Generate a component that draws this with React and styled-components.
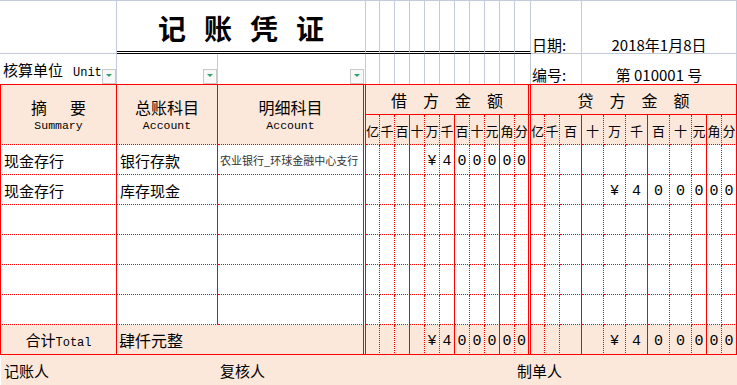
import React from 'react';
import styled, { createGlobalStyle } from 'styled-components';

const RED = '#ff0000';
const GRID = '#c3cad9';
const PEACH = '#fce8da';
const CJK = `"Noto Sans CJK SC", "Noto Sans", sans-serif`;
const MONO = `"Liberation Mono", "DejaVu Sans Mono", monospace`;

const Global = createGlobalStyle`
  html, body { margin: 0; padding: 0; background: #fff; }
  body { font-family: ${CJK}; color: #000; overflow: hidden; }
  * { box-sizing: border-box; }
`;

const Sheet = styled.div`
  display: grid;
  grid-template-columns: 117px 101px 148px 14px repeat(9, 15px) 16px 14px 15px repeat(6, 22px) repeat(3, 15px);
  grid-template-rows: 54px 30px 31px 30px repeat(6, 30px) 30px 31px;
  width: 737px;
  font-size: 15px;
  line-height: 1;
`;

/* ---------- top (plain sheet grid) area ---------- */
const TopCell = styled.div`
  grid-column: span ${p => p.$span || 1};
  position: relative;
  display: flex;
  align-items: flex-end;
  justify-content: ${p => (p.$center ? 'center' : 'flex-start')};
  padding: 0 0 ${p => p.$pb ?? 1}px ${p => p.$pl ?? 0}px;
  border-top: ${p => (p.$first ? `1px solid ${GRID}` : 'none')};
  border-right: 1px solid ${GRID};
  border-bottom: ${p =>
    p.$rule === 'double' ? '3px double #000' : p.$rule === 'grid' ? `1px solid ${GRID}` : 'none'};
  white-space: nowrap;
`;

const TitleCell = styled.div`
  grid-column: span 2;
  display: flex;
  align-items: center;
  justify-content: center;
  gap: 18px;
  padding-top: 3px;
  border-top: 1px solid ${GRID};
  border-right: 1px solid ${GRID};
  border-bottom: 3px double #000;
  font-size: 28px;
  font-weight: 700;
`;

const Label = styled.span`
  white-space: nowrap;
`;

const Latin = styled.span`
  font-family: ${MONO};
  font-size: ${p => p.$size || 12}px;
  margin-left: ${p => p.$gap || 0}px;
`;

const Dropdown = styled.span`
  position: absolute;
  right: ${p => p.$inset || 0}px;
  bottom: 0;
  width: 14px;
  height: 15px;
  border: 1px solid #c9c9c9;
  background: #f8f8f8;
  &::after {
    content: '';
    position: absolute;
    left: 50%;
    top: 4px;
    margin-left: -3px;
    border-left: 3px solid transparent;
    border-right: 3px solid transparent;
    border-top: 3px solid #2ea36c;
  }
`;

/* ---------- voucher table ---------- */
const HeadCell = styled.div`
  grid-row: span ${p => p.$rows || 1};
  grid-column: span ${p => p.$span || 1};
  display: flex;
  flex-direction: column;
  align-items: center;
  justify-content: center;
  padding-top: ${p => p.$pt || 0}px;
  background: ${PEACH};
  border-top: 1px solid ${RED};
  border-left: ${p => (p.$left ? `1px solid ${RED}` : 'none')};
  border-right: ${p => (p.$double ? `3px double ${RED}` : `1px solid ${RED}`)};
  border-bottom: 1px ${p => (p.$solidBottom ? 'solid' : 'dotted')} ${RED};
`;

const HeadTitle = styled.div`
  display: flex;
  gap: ${p => p.$gap || 0}px;
  font-size: 16px;
  line-height: 19px;
  white-space: nowrap;
`;

const HeadSub = styled.div`
  font-family: ${MONO};
  font-size: 11.5px;
  line-height: 14px;
  margin-top: 2px;
`;

const sepBorder = sep =>
  sep === 'double' ? `3px double ${RED}` : sep === 'solid' ? `1px solid ${RED}` : `1px dotted ${RED}`;

const DigitCell = styled.div`
  display: flex;
  align-items: center;
  justify-content: center;
  padding-top: ${p => (p.$head ? 1 : 3)}px;
  background: ${p => (p.$peach ? PEACH : '#fff')};
  border-right: ${p => sepBorder(p.$sep)};
  border-bottom: 1px ${p => (p.$closing ? 'solid' : 'dotted')} ${RED};
  font-family: ${p => (p.$head ? CJK : MONO)};
  font-size: ${p => (p.$head ? 13 : 15)}px;
  white-space: nowrap;
`;

const TextCell = styled.div`
  grid-column: span ${p => p.$span || 1};
  display: flex;
  align-items: center;
  justify-content: ${p => (p.$center ? 'center' : 'flex-start')};
  padding: 1px 0 0 ${p => p.$pl ?? 3}px;
  background: ${p => (p.$peach ? PEACH : '#fff')};
  border-left: ${p => (p.$left ? `1px solid ${RED}` : 'none')};
  border-right: ${p => (p.$double ? `3px double ${RED}` : `1px solid ${RED}`)};
  border-bottom: 1px ${p => (p.$closing ? 'solid' : 'dotted')} ${RED};
  font-size: ${p => p.$size || 15}px;
  color: ${p => p.$color || '#000'};
  white-space: nowrap;
  overflow: hidden;
`;

const FooterBar = styled.div`
  grid-column: 1 / -1;
  display: flex;
  align-items: center;
  margin-left: 1px;
  background: ${PEACH};
  font-size: 15px;
`;

const Signer = styled.div`
  width: ${p => p.$w}px;
  padding-left: ${p => p.$pl}px;
  white-space: nowrap;
`;

/* ---------- data ---------- */
const units = ['亿', '千', '百', '十', '万', '千', '百', '十', '元', '角', '分'];
const debitSep = ['dot', 'dot', 'solid', 'dot', 'dot', 'solid', 'dot', 'dot', 'solid', 'dot', 'double'];
const creditSep = ['dot', 'dot', 'solid', 'dot', 'dot', 'solid', 'dot', 'dot', 'solid', 'dot', 'solid'];
const amount = ['', '', '', '', '¥', '4', '0', '0', '0', '0', '0'];
const blank = Array(11).fill('');

const entries = [
  { summary: '现金存行', general: '银行存款', detail: '农业银行_环球金融中心支行', debit: amount, credit: blank },
  { summary: '现金存行', general: '库存现金', detail: '', debit: blank, credit: amount },
  { summary: '', general: '', detail: '', debit: blank, credit: blank },
  { summary: '', general: '', detail: '', debit: blank, credit: blank },
  { summary: '', general: '', detail: '', debit: blank, credit: blank },
  { summary: '', general: '', detail: '', debit: blank, credit: blank },
];

const Digits = ({ values, seps, peach, closing, head, prefix }) =>
  values.map((v, i) => (
    <DigitCell key={prefix + i} $sep={seps[i]} $peach={peach} $closing={closing} $head={head}>
      {v}
    </DigitCell>
  ));

export default function App() {
  return (
    <>
      <Global />
      <Sheet>
        {/* row 1 */}
        <TopCell $first $rule="grid" />
        <TitleCell>
          <span>记</span>
          <span>账</span>
          <span>凭</span>
          <span>证</span>
        </TitleCell>
        {units.map((_, i) => (
          <TopCell key={'t1' + i} $first $rule="double" />
        ))}
        <TopCell $first $rule="grid" $span={3} $pl={1} $pb={1}>日期:</TopCell>
        <TopCell $first $rule="grid" $span={8} $center $pb={1}>2018年1月8日</TopCell>

        {/* row 2 */}
        <TopCell $pl={3} $pb={5}>
          <Label>
            核算单位<Latin $gap={10}>Unit</Latin>
          </Label>
          <Dropdown />
        </TopCell>
        <TopCell>
          <Dropdown />
        </TopCell>
        <TopCell>
          <Dropdown $inset={1} />
        </TopCell>
        {units.map((_, i) => (
          <TopCell key={'t2' + i} />
        ))}
        <TopCell $span={3} $pl={1} $pb={2}>编号:</TopCell>
        <TopCell $span={8} $center $pb={2}>第 010001 号</TopCell>

        {/* header */}
        <HeadCell $rows={2} $left $pt={2}>
          <HeadTitle $gap={23}>
            <span>摘</span>
            <span>要</span>
          </HeadTitle>
          <HeadSub>Summary</HeadSub>
        </HeadCell>
        <HeadCell $rows={2} $pt={2}>
          <HeadTitle>总账科目</HeadTitle>
          <HeadSub>Account</HeadSub>
        </HeadCell>
        <HeadCell $rows={2} $double $pt={2}>
          <HeadTitle>明细科目</HeadTitle>
          <HeadSub>Account</HeadSub>
        </HeadCell>
        <HeadCell $span={11} $double $solidBottom $pt={2}>
          <HeadTitle $gap={16}>
            <span>借</span>
            <span>方</span>
            <span>金</span>
            <span>额</span>
          </HeadTitle>
        </HeadCell>
        <HeadCell $span={11} $solidBottom $pt={2}>
          <HeadTitle $gap={16}>
            <span>贷</span>
            <span>方</span>
            <span>金</span>
            <span>额</span>
          </HeadTitle>
        </HeadCell>
        <Digits values={units} seps={debitSep} peach head prefix="hd" />
        <Digits values={units} seps={creditSep} peach head prefix="hc" />

        {/* entries */}
        {entries.map((e, r) => (
          <React.Fragment key={'r' + r}>
            <TextCell $left>{e.summary}</TextCell>
            <TextCell>{e.general}</TextCell>
            <TextCell $double $size={11} $color="#333" $pl={2}>{e.detail}</TextCell>
            <Digits values={e.debit} seps={debitSep} prefix={'d' + r} />
            <Digits values={e.credit} seps={creditSep} prefix={'c' + r} />
          </React.Fragment>
        ))}

        {/* total */}
        <TextCell $left $peach $closing $center $pl={0}>
          <Label>
            合计<Latin $size={12}>Total</Latin>
          </Label>
        </TextCell>
        <TextCell $span={2} $double $peach $closing $size={16} $pl={2}>肆仟元整</TextCell>
        <Digits values={amount} seps={debitSep} peach closing prefix="td" />
        <Digits values={amount} seps={creditSep} peach closing prefix="tc" />

        {/* signatures */}
        <FooterBar>
          <Signer $w={216} $pl={3}>记账人</Signer>
          <Signer $w={297} $pl={3}>复核人</Signer>
          <Signer $w={200} $pl={3}>制单人</Signer>
        </FooterBar>
      </Sheet>
    </>
  );
}
